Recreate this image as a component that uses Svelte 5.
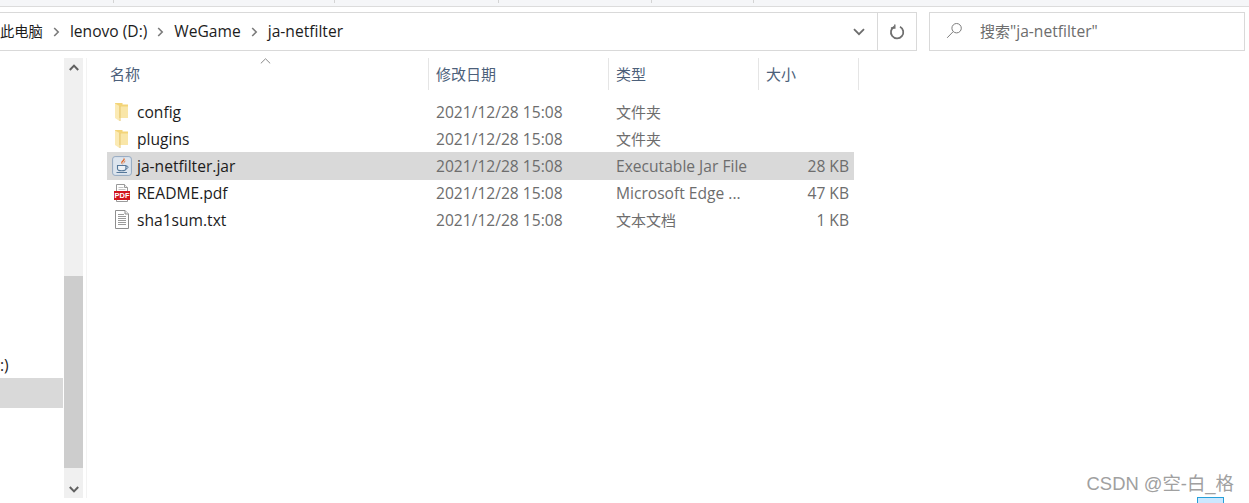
<script lang="ts">
  const ribbonTicks = [114, 221, 164, 153, 102];

  interface FileRow {
    name: string;
    date: string;
    type: string;
    size: string;
    icon: 'folder' | 'jar' | 'pdf' | 'txt';
    selected?: boolean;
  }

  const files: FileRow[] = [
    { name: 'config', date: '2021/12/28 15:08', type: '文件夹', size: '', icon: 'folder' },
    { name: 'plugins', date: '2021/12/28 15:08', type: '文件夹', size: '', icon: 'folder' },
    { name: 'ja-netfilter.jar', date: '2021/12/28 15:08', type: 'Executable Jar File', size: '28 KB', icon: 'jar', selected: true },
    { name: 'README.pdf', date: '2021/12/28 15:08', type: 'Microsoft Edge ...', size: '47 KB', icon: 'pdf' },
    { name: 'sha1sum.txt', date: '2021/12/28 15:08', type: '文本文档', size: '1 KB', icon: 'txt' }
  ];

  const crumbs = ['lenovo (D:)', 'WeGame', 'ja-netfilter'];
  const isCjk = (s: string) => /[^\x00-\x7f]/.test(s);
</script>

<div class="window">
  <div class="ribbon">
    {#each ribbonTicks as w}
      <span class="tick" style="width:{w}px"></span>
    {/each}
  </div>

  <div class="navbar">
    <div class="address">
      <div class="crumbs">
        <span class="first">此电脑</span>
        {#each crumbs as c}
          <svg class="sep" width="7" height="10" viewBox="0 0 7 10" fill="none" stroke="#7a7a7a" stroke-width="1.6"><path d="m1.2 1 4 4-4 4"/></svg>
          <span>{c}</span>
        {/each}
      </div>
      <div class="drop">
        <svg width="12" height="8" viewBox="0 0 12 8" fill="none" stroke="#6d6d6d" stroke-width="1.8"><path d="m1 1.2 5 5 5-5"/></svg>
      </div>
      <div class="refresh">
        <svg width="16" height="16" viewBox="0 0 16 16" fill="none" stroke="#6f6f6f" stroke-width="1.8"><path d="M5.400 2.600A6.200 6.200 0 1 0 11 2.700"/><path d="M5.800 0.400v3.600H1.900" stroke-width="1.400"/></svg>
      </div>
    </div>
    <div class="search">
      <svg width="17" height="17" viewBox="0 0 17 17" fill="none" stroke="#7d7d7d" stroke-width="1"><circle cx="10.600" cy="6.200" r="4.700"/><path d="M7.200 9.600 1.200 15.800"/></svg>
      <span><span class="cjk">搜索</span>"ja-netfilter"</span>
    </div>
  </div>

  <div class="body">
    <aside class="sidebar">
      <span class="drive">:)</span>
      <div class="nav-selected"></div>
    </aside>

    <div class="scrollbar">
      <div class="arrow">
        <svg width="10" height="7" viewBox="0 0 10 7" fill="none" stroke="#606060" stroke-width="2"><path d="m.8 6 4.200-4.400L9.200 6"/></svg>
      </div>
      <div class="track">
        <div class="thumb"></div>
      </div>
      <div class="arrow">
        <svg width="10" height="7" viewBox="0 0 10 7" fill="none" stroke="#606060" stroke-width="2"><path d="M.8 1 5 5.400 9.200 1"/></svg>
      </div>
    </div>

    <main class="list">
      <svg class="sort" width="11" height="6" viewBox="0 0 11 6" fill="none" stroke="#8a8a8a" stroke-width="1"><path d="m.8 5.400 4.700-4.600 4.700 4.600"/></svg>
      <div class="head">
        <div class="hcell name">名称</div>
        <div class="hcell">修改日期</div>
        <div class="hcell">类型</div>
        <div class="hcell last">大小</div>
      </div>
      <div class="rows">
        {#each files as f}
          <div class="row" class:selected={f.selected}>
            <div class="cell-name">
              <span class="icon">
                {#if f.icon === 'folder'}
                  <svg width="14" height="18" viewBox="0 0 14 18">
                    <path d="M0 0h7.500v1.500H13V15H0z" fill="#f3d478"/>
                    <path d="M5 3.500h8V15H5z" fill="#f9e6a8"/>
                    <path d="M0 .5 4.500 3v15L0 15z" fill="#fbeab4"/>
                    <path d="M4.500 3v15h1V3z" fill="#e6c56e"/>
                  </svg>
                {:else if f.icon === 'jar'}
                  <svg width="20" height="20" viewBox="0 0 20 20">
                    <rect x=".6" y=".6" width="18.800" height="18.800" rx="2.500" fill="#dde5ee" stroke="#93a8c0"/>
                    <path d="M11.500 1.500c1.500 2.200-3.300 3.500-2 6 .3.600.8 1 1.200 1.300C9.600 7 10.500 6 12 4.800c1.200-1 .8-2.300-.5-3.300z" fill="#df5f1c"/>
                    <path d="M13.800 4.500c-2 .8-2.600 2-1.800 3.800-.3-1.700 1-2.300 1.800-3.800z" fill="#df5f1c"/>
                    <path d="M5.500 9.500h8.400v3.300c0 1.300-1.500 2-4.200 2s-4.200-.7-4.200-2z" fill="#eef2f6" stroke="#56789a" stroke-width="1.100"/>
                    <path d="M13.900 10.200h1.300c1.300 0 1.300 2.500-1.500 2.900" fill="none" stroke="#56789a"/>
                    <path d="M4.500 16.500h10.500" stroke="#56789a"/>
                  </svg>
                {:else if f.icon === 'pdf'}
                  <svg width="16" height="18" viewBox="0 0 16 18">
                    <path d="M2.500.5H10.500L13.500 3.500V17.500h-11z" fill="#fff" stroke="#9a9a9a"/>
                    <path d="M10.500 .5V3.500h3" fill="#eee" stroke="#9a9a9a"/>
                    <path d="M4.500 3.500h5M4.500 5.500h7" stroke="#c4c4c4"/>
                    <rect x="0" y="7" width="16" height="9" fill="#d2161e"/>
                    <text x="8" y="14.400" class="pdf-label" text-anchor="middle">PDF</text>
                  </svg>
                {:else}
                  <svg width="14" height="19" viewBox="0 0 14 19">
                    <path d="M.5.5H10L13.500 4v14.500H.5z" fill="#fff" stroke="#8e8e8e"/>
                    <path d="M10 .5V4h3.500" fill="#eee" stroke="#8e8e8e"/>
                    <path d="M3 4.500h6M3 6.500h8M3 8.500h8M3 10.500h8M3 12.500h8M3 14.500h8" stroke="#9b9b9b"/>
                  </svg>
                {/if}
              </span>
              <span>{f.name}</span>
            </div>
            <div class="cell">{f.date}</div>
            <div class="cell" class:cjk={isCjk(f.type)}>{f.type}</div>
            <div class="cell size">{f.size}</div>
          </div>
        {/each}
      </div>
    </main>
  </div>

  <div class="watermark">CSDN @空-白_格</div>
  <div class="resize-hint"></div>
</div>

<style>
  :global(body) {
    margin: 0;
    background: #fff;
  }
  .window {
    position: relative;
    width: 1249px;
    height: 503px;
    overflow: hidden;
    background: #fff;
    font-family: "Open Sans", "Noto Sans CJK SC", sans-serif;
    font-size: 15.6px;
  }

  .ribbon {
    display: flex;
    height: 6px;
    background: #f5f6f8;
    border-bottom: 1px solid #dcdcdc;
  }
  .tick {
    height: 3px;
    box-sizing: border-box;
    border-right: 1px solid #d4d4d4;
  }

  .navbar {
    display: flex;
    gap: 12px;
    padding-top: 5px;
    height: 39px;
  }
  .address {
    display: flex;
    width: 917px;
    height: 39px;
    box-sizing: border-box;
    border: 1px solid #d9d9d9;
    border-left: none;
    flex-shrink: 0;
  }
  .crumbs {
    flex: 1;
    display: flex;
    align-items: center;
    padding-bottom: 2px;
    color: #1c1c1c;
  }
  .first {
    font-size: 14.3px;
  }
  .sep {
    margin: 2px 10px 0;
  }
  .drop {
    width: 36px;
    display: flex;
    align-items: center;
    justify-content: center;
  }
  .refresh {
    width: 38px;
    display: flex;
    align-items: center;
    justify-content: center;
    border-left: 1px solid #d9d9d9;
  }
  .search {
    width: 316px;
    height: 39px;
    box-sizing: border-box;
    border: 1px solid #d9d9d9;
    display: flex;
    align-items: center;
    gap: 17px;
    padding: 0 0 2px 16px;
    color: #6d6d6d;
  }

  .body {
    display: flex;
    padding-top: 7px;
    height: 440px;
  }
  .sidebar {
    position: relative;
    width: 64px;
    flex-shrink: 0;
    color: #1c1c1c;
  }
  .drive {
    position: absolute;
    left: 0;
    top: 296px;
  }
  .nav-selected {
    position: absolute;
    left: 0;
    top: 320px;
    width: 63px;
    height: 30px;
    background: #d9d9d9;
  }

  .scrollbar {
    width: 19px;
    height: 440px;
    flex-shrink: 0;
    background: #f0f0f0;
    display: flex;
    flex-direction: column;
  }
  .arrow {
    height: 18px;
    display: flex;
    align-items: center;
    justify-content: center;
    flex-shrink: 0;
  }
  .track {
    flex: 1;
    padding-top: 200px;
    padding-bottom: 12px;
    display: flex;
  }
  .thumb {
    flex: 1;
    background: #cdcdcd;
  }

  .list {
    position: relative;
    flex: 1;
    margin-left: 3px;
    height: 440px;
    border-left: 1px solid #f3f3f3;
  }
  .sort {
    position: absolute;
    left: 173px;
    top: 0;
  }
  .head {
    display: grid;
    grid-template-columns: 341px 180px 150px 101px;
    height: 32px;
  }
  .hcell {
    display: flex;
    align-items: center;
    padding: 0 0 2px 7px;
    color: #4c607a;
    font-size: 15px;
    border-left: 1px solid #e5e5e5;
  }
  .hcell.name {
    border-left: none;
    padding-left: 23px;
  }
  .hcell.last {
    border-right: 1px solid #e5e5e5;
  }

  .rows {
    padding: 8px 0 0 20px;
  }
  .row {
    display: grid;
    grid-template-columns: 321px 180px 150px 96px;
    width: 747px;
    height: 27px;
    align-items: center;
    color: #6d6d6d;
  }
  .row.selected {
    background: #d9d9d9;
    height: 28px;
    margin-bottom: -1px;
  }
  .cell-name {
    display: flex;
    align-items: center;
    color: #1c1c1c;
  }
  .icon {
    width: 30px;
    height: 20px;
    display: flex;
    align-items: center;
    justify-content: center;
    flex-shrink: 0;
  }
  .pdf-label {
    font-family: "Liberation Sans", sans-serif;
    font-weight: 700;
    font-size: 7.500px;
    fill: #fff;
  }
  .cell {
    padding-left: 8px;
    white-space: nowrap;
  }
  .cjk {
    font-size: 15px;
  }
  .cell.size {
    padding-left: 0;
    padding-right: 5px;
    text-align: right;
  }

  .watermark {
    position: absolute;
    right: 15px;
    top: 472px;
    color: #a0a0a0;
    font-family: "Liberation Sans", "Noto Sans CJK SC", sans-serif;
    font-size: 18.400px;
    line-height: 24px;
  }
  .resize-hint {
    position: absolute;
    left: 1197px;
    top: 497px;
    width: 27px;
    height: 6px;
    box-sizing: border-box;
    background: #cce8ff;
    border: 1px solid #26a0da;
    border-bottom: none;
  }
</style>
